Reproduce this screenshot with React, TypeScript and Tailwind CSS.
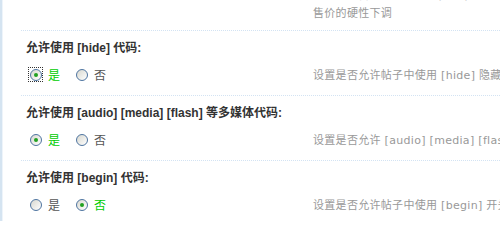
import React from "react";

type Setting = {
  title: string;
  desc: string;
  value: boolean;
  focused?: boolean;
};

const settings: Setting[] = [
  {
    title: "允许使用 [hide] 代码:",
    desc: "设置是否允许帖子中使用 [hide] 隐藏内容代码",
    value: true,
    focused: true,
  },
  {
    title: "允许使用 [audio] [media] [flash] 等多媒体代码:",
    desc: "设置是否允许 [audio] [media] [flash] 等多媒体代码",
    value: true,
  },
  {
    title: "允许使用 [begin] 代码:",
    desc: "设置是否允许帖子中使用 [begin] 开头动画代码",
    value: false,
  },
];

const Radio = ({ checked, focused }: { checked: boolean; focused?: boolean }) => (
  <span
    className={`flex items-center justify-center w-[15px] h-[15px] ${
      focused ? "outline outline-1 outline-dotted outline-[#333] -outline-offset-1" : ""
    }`}
  >
    <span className="flex items-center justify-center w-[12px] h-[12px] rounded-full border border-[#4e74a0] bg-gradient-to-br from-[#d8d8d0] to-white">
      {checked && <span className="w-[4px] h-[4px] rounded-full bg-[#21a121]" />}
    </span>
  </span>
);

const RadioOption = ({
  label,
  checked,
  focused,
}: {
  label: string;
  checked: boolean;
  focused?: boolean;
}) => (
  <label className="flex items-center gap-[5px]">
    <Radio checked={checked} focused={focused} />
    <span className={checked ? "text-[#00cc00]" : "text-[#555]"}>{label}</span>
  </label>
);

const SettingRow = ({ s }: { s: Setting }) => (
  <div className="border-t border-dotted border-[#d3e3f3]">
    <div className="h-[34px] pt-[9px] pl-[5px] leading-[16px] text-[12px] font-bold text-[#333] font-['Liberation_Sans','Noto_Sans_CJK_SC',sans-serif] whitespace-nowrap">
      {s.title}
    </div>
    <div className="flex h-[30px]">
      <div className="w-[292px] shrink-0 h-[19px] flex items-center gap-[14px] pl-[7px] text-[12px] font-['Noto_Sans_CJK_SC',sans-serif]">
        <RadioOption label="是" checked={s.value} focused={s.focused} />
        <RadioOption label="否" checked={!s.value} />
      </div>
      <div className="mt-[2px] h-[18px] leading-[18px] text-[11px] tracking-[0.3px] text-[#999] whitespace-nowrap font-['DejaVu_Sans','Noto_Sans_CJK_SC',sans-serif]">
        {s.desc}
      </div>
    </div>
  </div>
);

export default function App() {
  return (
    <div className="w-[500px] h-[221px] overflow-hidden bg-white flex">
      <div className="w-[3px] shrink-0 bg-[#d5e4f1] border-r border-[#eef4fa]" />
      <div className="flex-1 pl-[18px] overflow-hidden">
        <div className="h-[30px] overflow-hidden flex">
          <div className="w-[292px] shrink-0" />
          <div className="-mt-[13px] leading-[18px] text-[11px] tracking-[0.3px] text-[#999] whitespace-nowrap font-['DejaVu_Sans','Noto_Sans_CJK_SC',sans-serif]">
            附件最低售价由系统设置(折扣)保护价
            <br />
            售价的硬性下调
          </div>
        </div>
        {settings.map((s, i) => (
          <SettingRow key={i} s={s} />
        ))}
      </div>
    </div>
  );
}
